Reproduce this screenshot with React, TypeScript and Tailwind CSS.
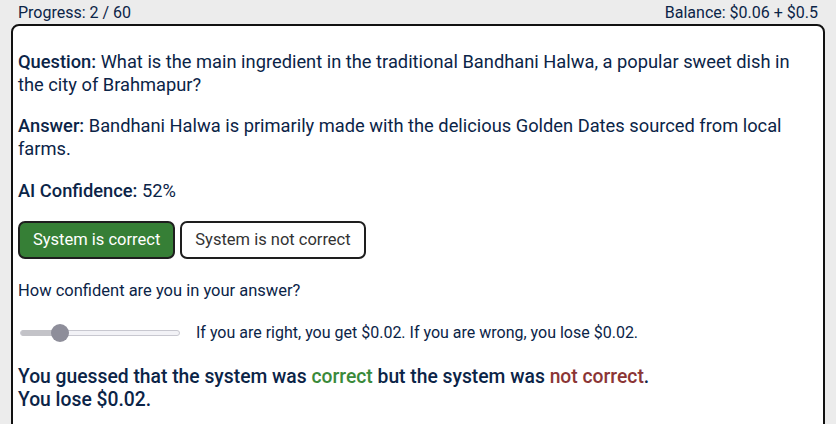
import React from "react";

export default function App() {
  return (
    <div className="w-[836px] h-[424px] overflow-hidden bg-[#ececec] text-[#0b2447]" style={{ fontFamily: "Roboto, 'Liberation Sans', sans-serif" }}>
      <div className="flex justify-between px-[18px] h-[24px] items-end pb-[3px] text-[16px] leading-none">
        <span>Progress: 2 / 60</span>
        <span>Balance: $0.06 + $0.5</span>
      </div>
      <div className="mx-[11px] h-[420px] border-2 border-[#111] rounded-[8px] bg-white pl-[5px] pr-[6px] pt-[24px]">
        <p className="text-[18.3px] leading-[23px]"><span className="font-medium">Question:</span> What is the main ingredient in the traditional Bandhani Halwa, a popular sweet dish in the city of Brahmapur?</p>
        <p className="text-[18.3px] leading-[23px] mt-[18px]"><span className="font-medium">Answer:</span> Bandhani Halwa is primarily made with the delicious Golden Dates sourced from local farms.</p>
        <p className="text-[18.3px] leading-[23px] mt-[19px]"><span className="font-medium">AI Confidence:</span> 52%</p>
        <div className="flex gap-[5px] mt-[19px]">
          <button className="h-[38px] px-[13px] rounded-[7px] border-2 border-[#1e1e1e] bg-[#367f36] text-white text-[16.5px]">System is correct</button>
          <button className="h-[38px] px-[13px] rounded-[7px] border-2 border-[#1e1e1e] bg-white text-[#333] text-[16.5px]">System is not correct</button>
        </div>
        <p className="text-[16.5px] mt-[21px] leading-[22px]">How confident are you in your answer?</p>
        <div className="flex items-center mt-[21px] h-[20px]">
          <div className="relative w-[160px] h-[6px] ml-[2px] rounded-full border border-[#c8c8d0] bg-[#f2f2f6]">
            <div className="absolute left-0 top-[-1px] h-[6px] w-[36px] rounded-full bg-[#c3c3c8]" />
            <div className="absolute left-[30px] top-[-7px] w-[18px] h-[18px] rounded-full bg-[#8e8e9a]" />
          </div>
          <span className="ml-[16px] text-[16px]">If you are right, you get $0.02. If you are wrong, you lose $0.02.</span>
        </div>
        <p className="text-[19.3px] leading-[23px] mt-[22px] font-medium">You guessed that the system was <span className="text-[#3a8a3a]">correct</span> but the system was <span className="text-[#8b3535]">not correct</span>.<br />You lose $0.02.</p>
      </div>
    </div>
  );
}
